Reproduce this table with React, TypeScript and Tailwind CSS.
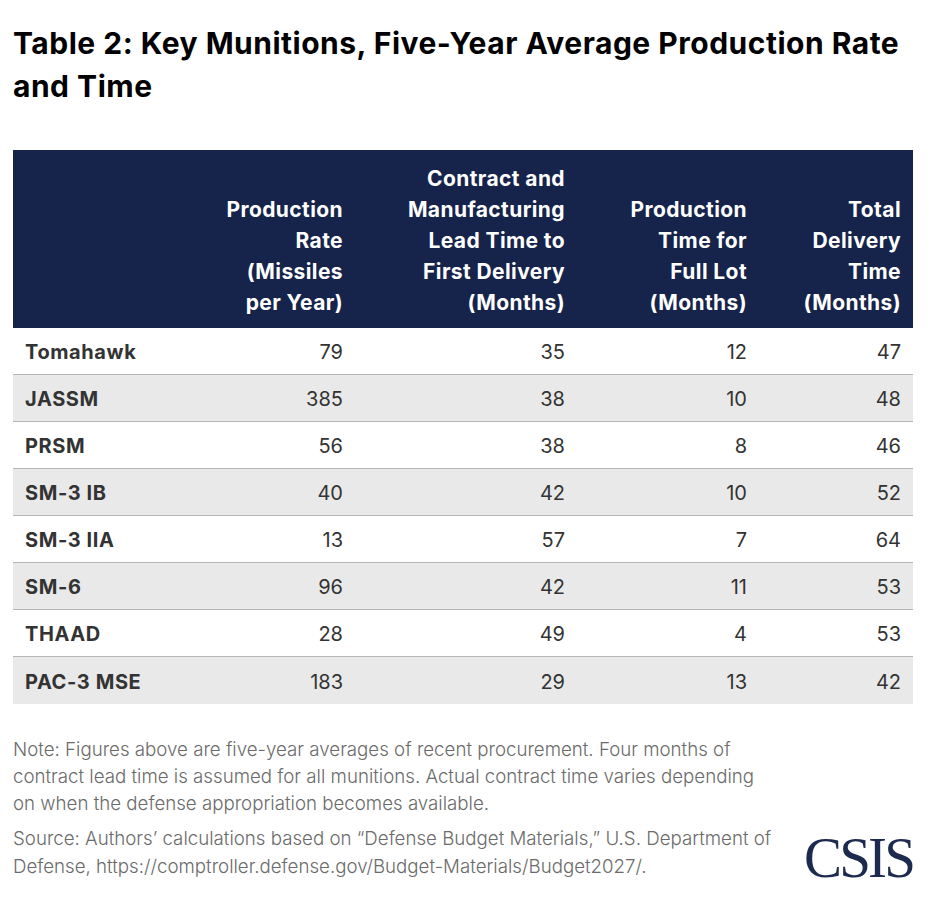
const rows = [
  { name: 'Tomahawk', rate: '79', lead: '35', prod: '12', total: '47' },
  { name: 'JASSM', rate: '385', lead: '38', prod: '10', total: '48' },
  { name: 'PRSM', rate: '56', lead: '38', prod: '8', total: '46' },
  { name: 'SM-3 IB', rate: '40', lead: '42', prod: '10', total: '52' },
  { name: 'SM-3 IIA', rate: '13', lead: '57', prod: '7', total: '64' },
  { name: 'SM-6', rate: '96', lead: '42', prod: '11', total: '53' },
  { name: 'THAAD', rate: '28', lead: '49', prod: '4', total: '53' },
  { name: 'PAC-3 MSE', rate: '183', lead: '29', prod: '13', total: '42' },
];

const grid = 'grid grid-cols-[190px_152px_222px_182px_154px]';

export default function App() {
  return (
    <div className="w-[939px] h-[905px] bg-white px-[13px] pt-[22px] font-['Inter',sans-serif]">
      <h1 className="text-[30px] leading-[43px] font-bold text-black tracking-[0.5px]">
        Table 2: Key Munitions, Five-Year Average Production Rate
        <br />
        and Time
      </h1>

      <div className="mt-[42px] w-[900px]">
        <div className={`${grid} bg-[#16234a] h-[178px] text-white font-bold text-[21px] leading-[31px] tracking-[0.4px]`}>
          <div />
          <div className="self-end text-right pr-[12px] pb-[10px]">
            Production
            <br />
            Rate
            <br />
            (Missiles
            <br />
            per Year)
          </div>
          <div className="self-end text-right pr-[12px] pb-[10px]">
            Contract and
            <br />
            Manufacturing
            <br />
            Lead Time to
            <br />
            First Delivery
            <br />
            (Months)
          </div>
          <div className="self-end text-right pr-[12px] pb-[10px]">
            Production
            <br />
            Time for
            <br />
            Full Lot
            <br />
            (Months)
          </div>
          <div className="self-end text-right pr-[12px] pb-[10px]">
            Total
            <br />
            Delivery
            <br />
            Time
            <br />
            (Months)
          </div>
        </div>

        {rows.map((r, i) => (
          <div
            key={r.name}
            className={`${grid} h-[47px] items-center pt-[2px] text-[20px] text-[#333333] ${
              i % 2 === 1 ? 'bg-[#e9e9e9]' : 'bg-white'
            } ${i < rows.length - 1 ? 'border-b border-[#b5b5b5]' : ''}`}
          >
            <div className="pl-[12px] font-bold tracking-[0.6px]">{r.name}</div>
            <div className="text-right pr-[12px]">{r.rate}</div>
            <div className="text-right pr-[12px]">{r.lead}</div>
            <div className="text-right pr-[12px]">{r.prod}</div>
            <div className="text-right pr-[12px]">{r.total}</div>
          </div>
        ))}
      </div>

      <div className="mt-[32px] text-[18.7px] leading-[27px] font-light text-[#6b6b6b]">
        Note: Figures above are five-year averages of recent procurement. Four months of
        <br />
        contract lead time is assumed for all munitions. Actual contract time varies depending
        <br />
        on when the defense appropriation becomes available.
      </div>

      <div className="mt-[8px] flex items-start justify-between w-[900px]">
        <div className="text-[18.7px] leading-[28px] font-light text-[#6b6b6b]">
          Source: Authors’ calculations based on “Defense Budget Materials,” U.S. Department of
          <br />
          Defense, https://comptroller.defense.gov/Budget-Materials/Budget2027/.
        </div>
        <div className="mt-[9px] font-['Liberation_Serif',serif] text-[57px] leading-[48px] text-[#1b2a4e] tracking-[-0.05em]">
          CSIS
        </div>
      </div>
    </div>
  );
}
